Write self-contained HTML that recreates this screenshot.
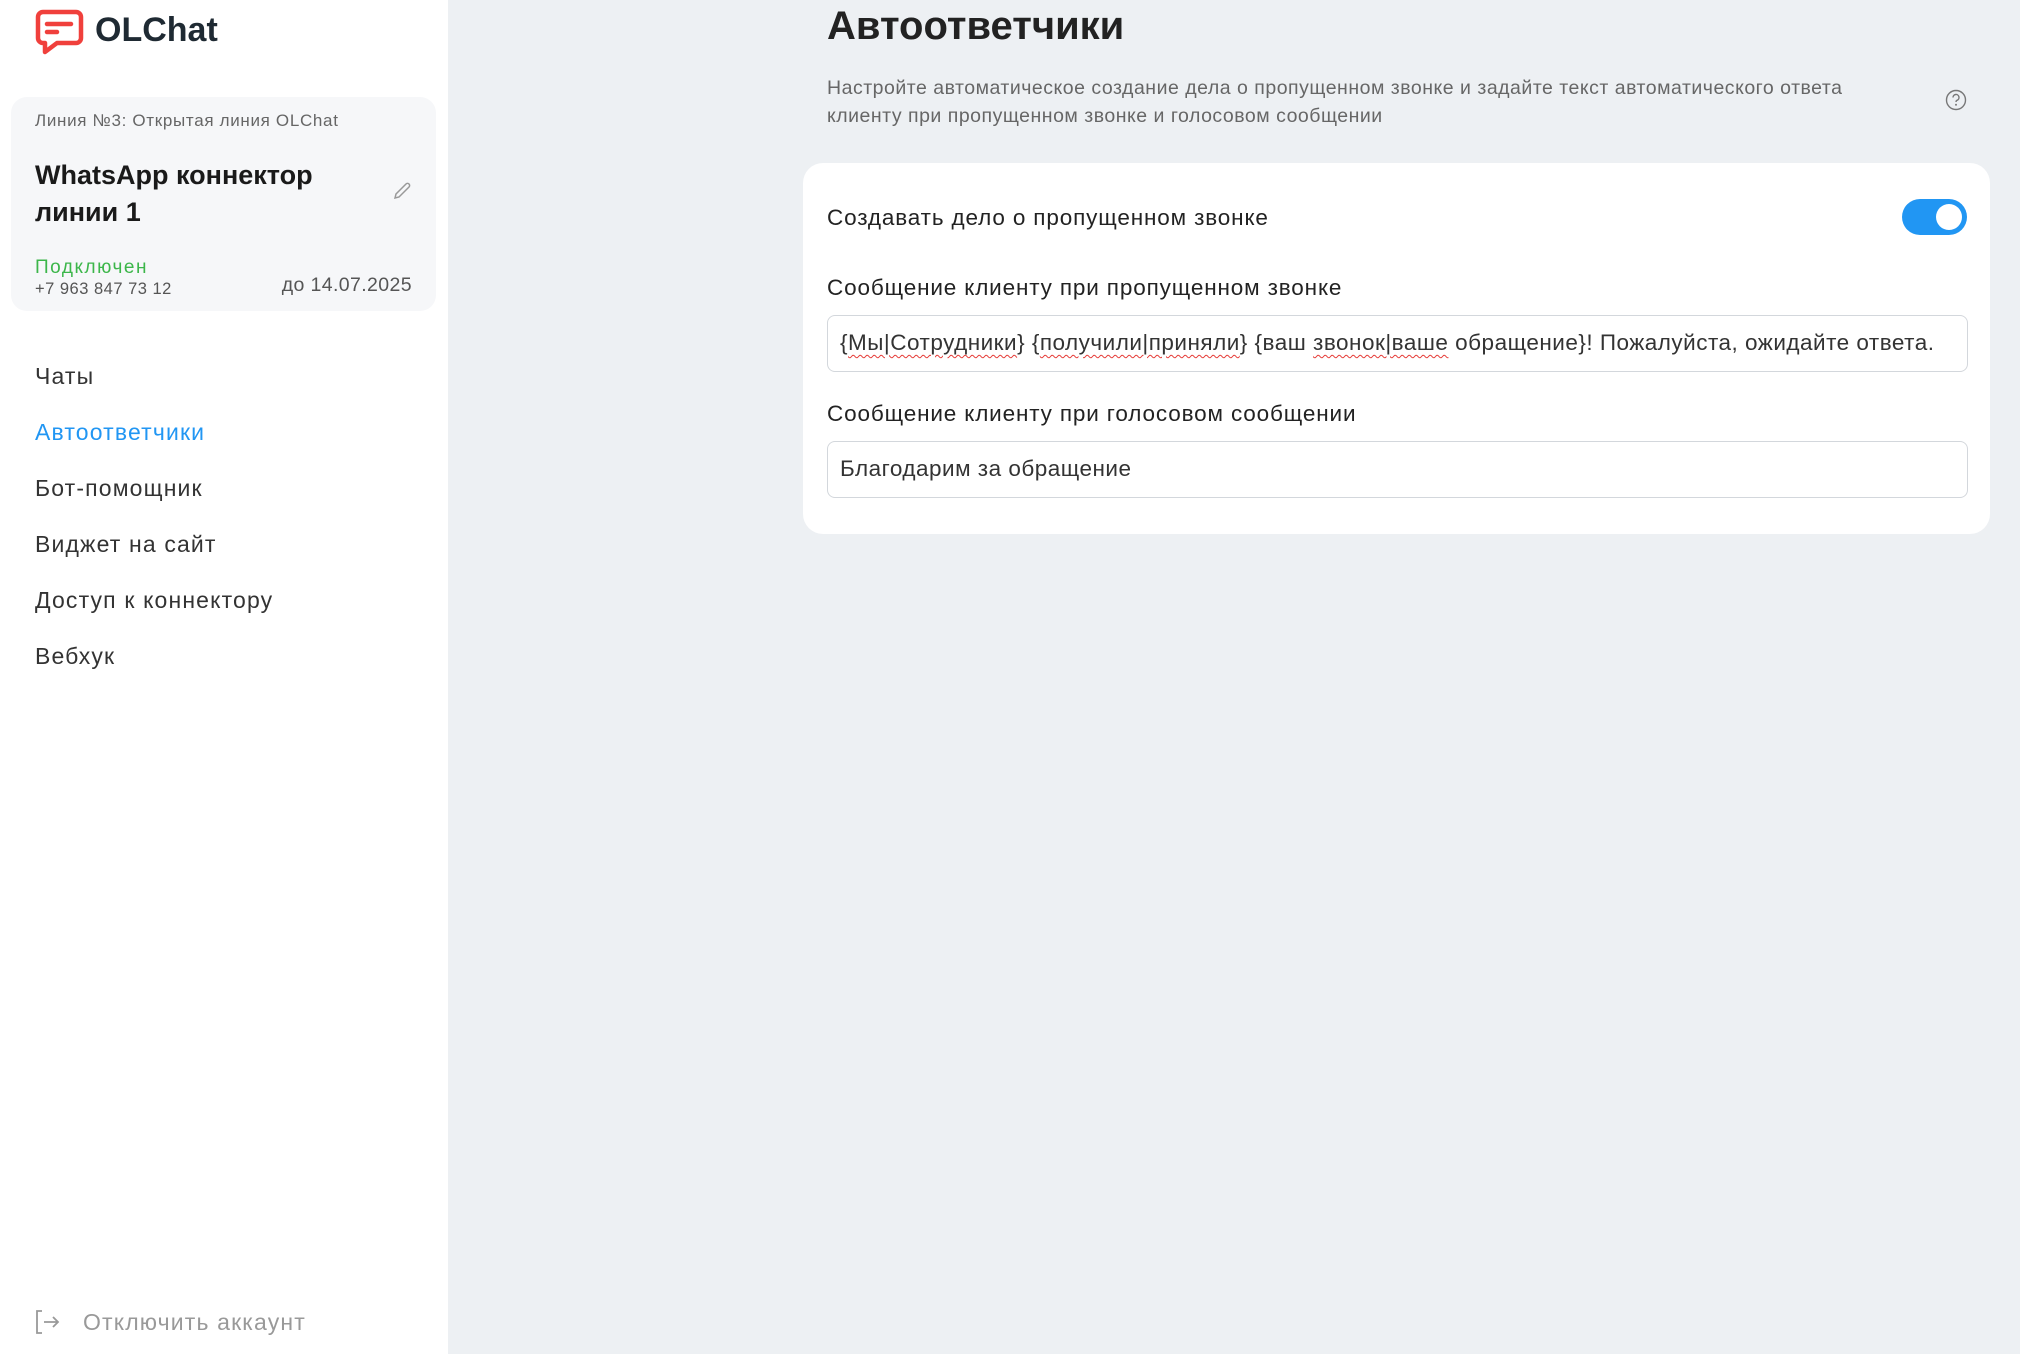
<!DOCTYPE html>
<html><head><meta charset="utf-8"><style>
*{box-sizing:border-box;margin:0;padding:0}
body{width:2020px;height:1354px;background:#edf0f3;font-family:"Liberation Sans",sans-serif;color:#222;position:relative;overflow:hidden}
.side{position:absolute;left:0;top:0;width:448px;height:1354px;background:#fff}
.abs{position:absolute;white-space:nowrap}
.card{position:absolute;left:11px;top:97px;width:425px;height:214px;background:#f6f7f9;border-radius:16px}
.nav{position:absolute;left:35px;font-size:23px;color:#333;letter-spacing:0.05em}
.main{position:absolute;left:803px;top:163px;width:1187px;height:371px;background:#fff;border-radius:20px}
.inp{position:absolute;left:24px;width:1141px;height:57px;border:1.5px solid #d3d7dc;border-radius:8px;font-size:22.5px;color:#333;padding:0 12px;line-height:54px;white-space:nowrap;overflow:hidden;letter-spacing:0.022em}
.w{text-decoration:underline wavy #e53935;text-decoration-thickness:1px;text-underline-offset:4px}
.lbl{position:absolute;left:24px;font-size:22.5px;color:#222;white-space:nowrap;letter-spacing:0.038em}
</style></head><body>
<div class="side">
 <svg class="abs" style="left:35px;top:9px" width="49" height="49" viewBox="0 0 49 49">
  <path d="M8 3h33a5 5 0 0 1 5 5v21a5 5 0 0 1-5 5H22l-12 9v-9H8a5 5 0 0 1-5-5V8a5 5 0 0 1 5-5z" fill="none" stroke="#f0403c" stroke-width="4.5" stroke-linejoin="round"/>
  <path d="M12 15h24M12 23h10" stroke="#f0403c" stroke-width="4.5" stroke-linecap="round"/>
 </svg>
 <div class="abs" style="left:95px;top:11px;font-size:34px;font-weight:bold;color:#1f2a33">OLChat</div>
 <div class="card">
  <div class="abs" style="left:24px;top:14px;font-size:17px;color:#666;letter-spacing:0.04em">Линия №3: Открытая линия OLChat</div>
  <div class="abs" style="left:24px;top:60px;font-size:27px;font-weight:bold;color:#1a1a1a;line-height:37px">WhatsApp коннектор<br>линии 1</div>
  <svg class="abs" style="left:381px;top:84px" width="20" height="20" viewBox="0 0 20 20"><path d="M3 17l1-4 10-10a2 2 0 0 1 3 3L7 16z" fill="none" stroke="#999" stroke-width="1.5"/></svg>
  <div class="abs" style="left:24px;top:160px;font-size:19px;color:#3cb64a;letter-spacing:0.08em">Подключен</div>
  <div class="abs" style="left:24px;top:183px;font-size:16.5px;color:#555;letter-spacing:0.03em">+7 963 847 73 12</div>
  <div class="abs" style="right:24px;top:177px;font-size:19.5px;color:#555;letter-spacing:0.02em">до 14.07.2025</div>
 </div>
 <div class="nav" style="top:363px">Чаты</div>
 <div class="nav" style="top:419px;color:#2196f3">Автоответчики</div>
 <div class="nav" style="top:475px">Бот-помощник</div>
 <div class="nav" style="top:531px">Виджет на сайт</div>
 <div class="nav" style="top:587px">Доступ к коннектору</div>
 <div class="nav" style="top:643px">Вебхук</div>
 <svg class="abs" style="left:34px;top:1309px" width="26" height="26" viewBox="0 0 26 26"><path d="M8 2H3v22h5M10 13h14M19 8l5 5-5 5" fill="none" stroke="#999" stroke-width="1.8"/></svg>
 <div class="abs" style="left:83px;top:1309px;font-size:23px;color:#999;letter-spacing:0.05em">Отключить аккаунт</div>
</div>
<div class="abs" style="left:827px;top:4px;font-size:40px;font-weight:bold;color:#222">Автоответчики</div>
<div class="abs" style="left:827px;top:74px;font-size:19.5px;color:#666;line-height:28px;letter-spacing:0.026em">Настройте автоматическое создание дела о пропущенном звонке и задайте текст автоматического ответа<br>клиенту при пропущенном звонке и голосовом сообщении</div>
<svg class="abs" style="left:1945px;top:89px" width="22" height="22" viewBox="0 0 22 22"><circle cx="11" cy="11" r="9.5" fill="none" stroke="#777" stroke-width="1.4"/><path d="M8 8.5a3 3 0 1 1 4 2.8c-.8.4-1 .9-1 1.7" fill="none" stroke="#777" stroke-width="1.4"/><circle cx="11" cy="15.8" r="1" fill="#777"/></svg>
<div class="main">
 <div class="lbl" style="top:42px">Создавать дело о пропущенном звонке</div>
 <div class="abs" style="left:1099px;top:36px;width:65px;height:36px;border-radius:18px;background:#2196f3"><div style="position:absolute;right:5px;top:5px;width:26px;height:26px;border-radius:50%;background:#fff"></div></div>
 <div class="lbl" style="top:112px">Сообщение клиенту при пропущенном звонке</div>
 <div class="inp" style="top:152px">{<span class="w">Мы|Сотрудники</span>} {<span class="w">получили|приняли</span>} {ваш <span class="w">звонок|ваше</span> обращение}! Пожалуйста, ожидайте ответа.</div>
 <div class="lbl" style="top:238px">Сообщение клиенту при голосовом сообщении</div>
 <div class="inp" style="top:278px">Благодарим за обращение</div>
</div>
</body></html>
